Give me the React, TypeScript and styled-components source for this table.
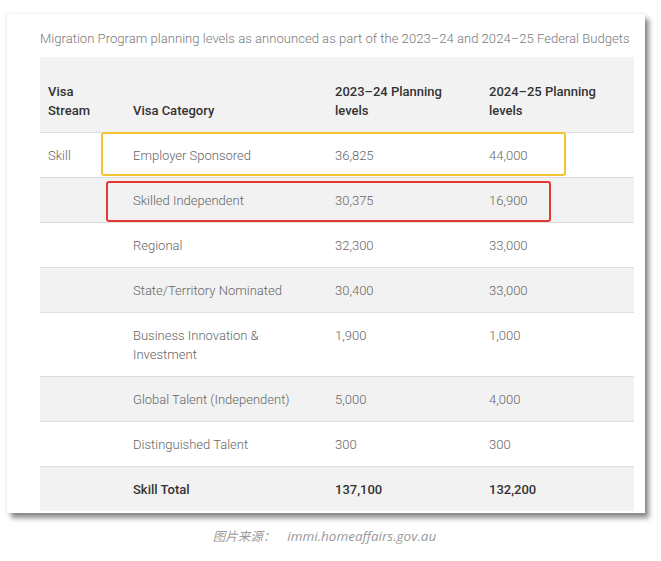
import React from "react";
import styled, { createGlobalStyle } from "styled-components";

const Global = createGlobalStyle`
  html, body { margin: 0; padding: 0; background: #ffffff; }
  body { font-family: Roboto, "Noto Sans", sans-serif; }
`;

const Page = styled.div`
  width: 661px;
  height: 561px;
  padding: 14px 0 0 7px;
  box-sizing: border-box;
  display: flex;
  flex-direction: column;
  align-items: flex-start;
`;

const Card = styled.div`
  width: 638px;
  box-sizing: border-box;
  background: #ffffff;
  padding: 16px 11px 2px 33px;
  box-shadow: 0 0 3px rgba(0, 0, 0, 0.12), 4px 5px 5px rgba(0, 0, 0, 0.45);
`;

const Caption = styled.div`
  font-family: Roboto, sans-serif;
  font-weight: 300;
  font-size: 13.1px;
  line-height: 18px;
  color: #7a7a7a;
  white-space: nowrap;
  margin-bottom: 9px;
`;

const TableWrap = styled.div`
  position: relative;
  width: 594px;
`;

const Table = styled.table`
  width: 594px;
  border-collapse: collapse;
  table-layout: fixed;
  font-family: Roboto, sans-serif;
  font-size: 13px;
  line-height: 19px;
`;

const HeadCell = styled.th`
  background: #f2f2f2;
  color: #333;
  font-weight: 500;
  text-align: left;
  vertical-align: bottom;
  padding: 25px 8px 12px;
  border-bottom: 1px solid #dedede;
`;

const Row = styled.tr<{ $shade: boolean }>`
  background: ${(p) => (p.$shade ? "#f2f2f2" : "#ffffff")};
`;

const Cell = styled.td<{ $bold?: boolean; $last?: boolean }>`
  color: ${(p) => (p.$bold ? "#333" : "#666")};
  font-weight: ${(p) => (p.$bold ? 500 : 300)};
  vertical-align: top;
  padding: 13px 8px 12px;
  border-bottom: ${(p) => (p.$last ? "none" : "1px solid #dedede")};
`;

const Highlight = styled.div<{ $color: string }>`
  position: absolute;
  border: 2px solid ${(p) => p.$color};
  border-radius: 3px;
  box-sizing: border-box;
  pointer-events: none;
`;

const Source = styled.div`
  align-self: stretch;
  margin-left: -7px;
  padding-right: 12px;
  text-align: center;
  margin-top: 13px;
  font-family: "Open Sans", "Noto Sans CJK SC", sans-serif;
  font-style: italic;
  font-size: 13.5px;
  color: #9a9a9a;
  white-space: pre;
`;

const SourceLabel = styled.span`
  font-family: "Noto Sans CJK SC", sans-serif;
  font-size: 12.5px;
  margin-right: 12px;
`;

const rows = [
  ["Skill", "Employer Sponsored", "36,825", "44,000"],
  ["", "Skilled Independent", "30,375", "16,900"],
  ["", "Regional", "32,300", "33,000"],
  ["", "State/Territory Nominated", "30,400", "33,000"],
  ["", "Business Innovation & Investment", "1,900", "1,000"],
  ["", "Global Talent (Independent)", "5,000", "4,000"],
  ["", "Distinguished Talent", "300", "300"],
];

export default function App() {
  return (
    <>
      <Global />
      <Page>
        <Card>
          <Caption>
            Migration Program planning levels as announced as part of the 2023–24 and 2024–25 Federal Budgets
          </Caption>
          <TableWrap>
            <Table>
              <colgroup>
                <col style={{ width: 85 }} />
                <col style={{ width: 202 }} />
                <col style={{ width: 154 }} />
                <col style={{ width: 153 }} />
              </colgroup>
              <thead>
                <tr>
                  <HeadCell>Visa Stream</HeadCell>
                  <HeadCell>Visa Category</HeadCell>
                  <HeadCell>2023–24 Planning levels</HeadCell>
                  <HeadCell>2024–25 Planning levels</HeadCell>
                </tr>
              </thead>
              <tbody>
                {rows.map((r, i) => (
                  <Row key={i} $shade={i % 2 === 1}>
                    {r.map((c, j) => (
                      <Cell key={j}>{c}</Cell>
                    ))}
                  </Row>
                ))}
                <Row $shade>
                  <Cell $bold $last></Cell>
                  <Cell $bold $last>Skill Total</Cell>
                  <Cell $bold $last>137,100</Cell>
                  <Cell $bold $last>132,200</Cell>
                </Row>
              </tbody>
            </Table>
            <Highlight $color="#f4c430" style={{ left: 61, top: 75, width: 465, height: 44 }} />
            <Highlight $color="#e53935" style={{ left: 66, top: 124, width: 445, height: 41 }} />
          </TableWrap>
        </Card>
        <Source>
          <SourceLabel>图片来源：</SourceLabel>
          immi.homeaffairs.gov.au
        </Source>
      </Page>
    </>
  );
}
